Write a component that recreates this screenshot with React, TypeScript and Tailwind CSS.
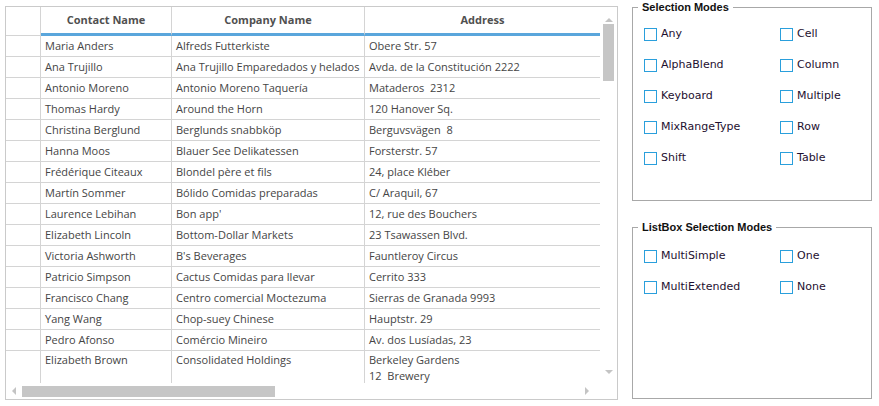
import React from "react";

type Row = { contact: string; company: string; address: string[] };

const rows: Row[] = [
  { contact: "Maria Anders", company: "Alfreds Futterkiste", address: ["Obere Str. 57"] },
  { contact: "Ana Trujillo", company: "Ana Trujillo Emparedados y helados", address: ["Avda. de la Constitución 2222"] },
  { contact: "Antonio Moreno", company: "Antonio Moreno Taquería", address: ["Mataderos  2312"] },
  { contact: "Thomas Hardy", company: "Around the Horn", address: ["120 Hanover Sq."] },
  { contact: "Christina Berglund", company: "Berglunds snabbköp", address: ["Berguvsvägen  8"] },
  { contact: "Hanna Moos", company: "Blauer See Delikatessen", address: ["Forsterstr. 57"] },
  { contact: "Frédérique Citeaux", company: "Blondel père et fils", address: ["24, place Kléber"] },
  { contact: "Martín Sommer", company: "Bólido Comidas preparadas", address: ["C/ Araquil, 67"] },
  { contact: "Laurence Lebihan", company: "Bon app'", address: ["12, rue des Bouchers"] },
  { contact: "Elizabeth Lincoln", company: "Bottom-Dollar Markets", address: ["23 Tsawassen Blvd."] },
  { contact: "Victoria Ashworth", company: "B's Beverages", address: ["Fauntleroy Circus"] },
  { contact: "Patricio Simpson", company: "Cactus Comidas para llevar", address: ["Cerrito 333"] },
  { contact: "Francisco Chang", company: "Centro comercial Moctezuma", address: ["Sierras de Granada 9993"] },
  { contact: "Yang Wang", company: "Chop-suey Chinese", address: ["Hauptstr. 29"] },
  { contact: "Pedro Afonso", company: "Comércio Mineiro", address: ["Av. dos Lusíadas, 23"] },
  { contact: "Elizabeth Brown", company: "Consolidated Holdings", address: ["Berkeley Gardens", "12  Brewery"] },
];

const cols = "grid grid-cols-[35px_131px_193px_235px]";

function Check({ label }: { label: string }) {
  return (
    <div className="flex items-center h-[31px]">
      <span className="w-[13px] h-[13px] border border-[#2a9fdc] bg-white shrink-0" />
      <span className="ml-[4px] whitespace-pre">{label}</span>
    </div>
  );
}

function Arrow({ dir }: { dir: "up" | "down" | "left" | "right" }) {
  const pts = {
    up: "0,5 4,1 8,5",
    down: "0,1 4,5 8,1",
    left: "5,0 1,4 5,8",
    right: "1,0 5,4 1,8",
  }[dir];
  const size = dir === "up" || dir === "down" ? "w-[8px] h-[6px]" : "w-[6px] h-[8px]";
  const vb = dir === "up" || dir === "down" ? "0 0 8 6" : "0 0 6 8";
  return (
    <svg viewBox={vb} className={size}>
      <polygon points={pts} fill="#c4c4c4" />
    </svg>
  );
}

function Grid() {
  return (
    <div
      className="w-[613px] h-[394px] border border-[#cacaca] flex flex-col bg-white text-[#454545]"
      style={{ fontFamily: '"Open Sans", "Noto Sans", sans-serif' }}
    >
      <div className="flex h-[376px]">
        <div className="w-[594px] flex flex-col overflow-hidden">
          <div className={`${cols} h-[29px] text-[11px] font-bold text-[#505050]`}>
            <div className="border-r border-b border-[#d4d4d4]" />
            {["Contact Name", "Company Name", "Address"].map((h) => (
              <div
                key={h}
                className="flex items-center justify-center border-r border-r-[#d4d4d4] border-b-[3px] border-b-[#5aa6dc] last:border-r-0"
              >
                {h}
              </div>
            ))}
          </div>
          <div className="h-[347px] overflow-hidden text-[11px]">
            {rows.map((r, i) => {
              const tall = r.address.length > 1;
              const lead = tall ? "pt-[1px] leading-[16px]" : "leading-[20px]";
              return (
                <div
                  key={i}
                  className={`${cols} ${tall ? "h-[40px]" : "h-[21px] border-b border-[#d4d4d4]"}`}
                >
                  <div className="border-r border-[#d4d4d4]" />
                  <div className={`border-r border-[#d4d4d4] pl-[4px] whitespace-nowrap overflow-hidden ${lead}`}>
                    {r.contact}
                  </div>
                  <div className={`border-r border-[#d4d4d4] pl-[4px] whitespace-nowrap overflow-hidden ${lead}`}>
                    {r.company}
                  </div>
                  <div className={`pl-[4px] whitespace-pre overflow-hidden ${lead}`}>
                    {r.address.map((a) => (
                      <div key={a}>{a}</div>
                    ))}
                  </div>
                </div>
              );
            })}
          </div>
        </div>
        <div className="w-[17px] flex flex-col items-center">
          <div className="h-[16px] flex items-end justify-center">
            <Arrow dir="up" />
          </div>
          <div className="w-[11px] h-[57px] bg-[#c6c6c6] mt-[1px]" />
          <div className="flex-1" />
          <div className="h-[14px] flex items-start justify-center">
            <Arrow dir="down" />
          </div>
        </div>
      </div>
      <div className="flex h-[16px]">
        <div className="w-[594px] flex items-center">
          <div className="w-[16px] flex justify-center">
            <Arrow dir="left" />
          </div>
          <div className="w-[253px] h-[11px] bg-[#c6c6c6]" />
          <div className="flex-1" />
          <div className="w-[16px] flex justify-start">
            <Arrow dir="right" />
          </div>
        </div>
      </div>
    </div>
  );
}

function Group({
  title,
  left,
  right,
  h,
  pt,
}: {
  title: string;
  left: string[];
  right: string[];
  h: string;
  pt: string;
}) {
  return (
    <fieldset className={`border border-[#a8a8a8] ${h}`}>
      <legend
        className="ml-[5px] px-[4px] text-[11px] font-bold leading-[13px] text-[#111]"
        style={{ fontFamily: '"Liberation Sans", Arial, sans-serif' }}
      >
        {title}
      </legend>
      <div
        className={`grid grid-cols-[136px_1fr] pl-[11px] text-[11px] text-[#1e1030] ${pt}`}
        style={{ fontFamily: '"DejaVu Sans", Verdana, sans-serif' }}
      >
        <div className="flex flex-col">
          {left.map((l) => (
            <Check key={l} label={l} />
          ))}
        </div>
        <div className="flex flex-col">
          {right.map((l) => (
            <Check key={l} label={l} />
          ))}
        </div>
      </div>
    </fieldset>
  );
}

export default function App() {
  return (
    <div className="w-[879px] h-[406px] bg-white flex pl-[5px] pt-[6px] overflow-hidden">
      <Grid />
      <div className="ml-[14px] w-[240px] flex flex-col -mt-[5px]">
        <Group
          title="Selection Modes"
          left={["Any", "AlphaBlend", "Keyboard", "MixRangeType", "Shift"]}
          right={["Cell", "Column", "Multiple", "Row", "Table"]}
          h="h-[200px]"
          pt="pt-[5px]"
        />
        <div className="h-[20px]" />
        <Group
          title="ListBox Selection Modes"
          left={["MultiSimple", "MultiExtended"]}
          right={["One", "None"]}
          h="h-[178px]"
          pt="pt-[7px]"
        />
      </div>
    </div>
  );
}
